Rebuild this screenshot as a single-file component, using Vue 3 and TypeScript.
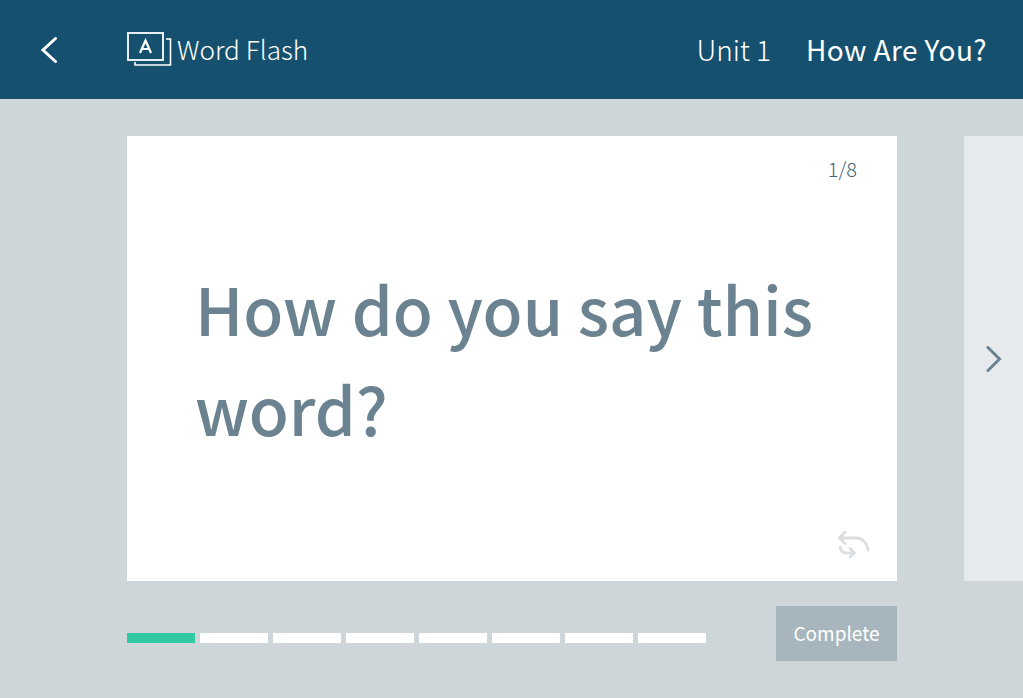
<template>
  <div class="page">
    <header class="top">
      <div class="top-left">
        <button class="back">
          <svg width="18" height="28" viewBox="0 0 18 28"><path d="M15.5 2.5 L3 14 L15.5 25.5" fill="none" stroke="#fff" stroke-width="3" stroke-linecap="round"/></svg>
        </button>
        <div class="brand">
          <svg width="46" height="36" viewBox="0 0 46 36" fill="none" stroke="#fff" stroke-width="1.6">
            <path d="M8 30 V33 H43.5 V7 H39"/>
            <rect x="1" y="1" width="35" height="27" stroke-width="1.8"/>
            <path d="M13 21 L18.5 8.5 L24 21 M15.5 17 H21.5" stroke-width="2.2"/>
          </svg>
          <span class="brand-name">Word Flash</span>
        </div>
      </div>
      <div class="crumbs">
        <span class="unit">Unit 1</span>
        <span class="lesson">How Are You?</span>
      </div>
    </header>

    <main class="stage">
      <div class="cards">
        <section class="card">
          <div class="count">1/8</div>
          <h1 class="question">How do you say this word?</h1>
          <svg class="flip" width="32" height="30" viewBox="0 0 32 30" fill="none" stroke="#dcdfe1" stroke-width="3" stroke-linecap="round" stroke-linejoin="round">
            <path d="M7 2 L1.5 8 L7 13.5 M1.5 8 H18 C25 8 29 13 30 20"/>
            <path d="M2 17 C3 21 5 23 8 23 H16 M12 18.5 L16.5 23 L12 27"/>
          </svg>
        </section>
        <aside class="next-card">
          <svg width="16" height="26" viewBox="0 0 16 26"><path d="M2 1.5 L13.5 13 L2 24.5" fill="none" stroke="#6b8391" stroke-width="3" stroke-linecap="round"/></svg>
        </aside>
      </div>

      <div class="bottom">
        <div class="progress">
          <span v-for="n in total" :key="n" class="seg" :class="{ done: n <= current }"></span>
        </div>
        <button class="complete">Complete</button>
      </div>
    </main>
  </div>
</template>

<script setup lang="ts">
const total = 8
const current = 1
</script>

<style>
html,
body {
  margin: 0;
  background: #ced6d9;
}
</style>

<style scoped>
.page {
  width: 1023px;
  height: 698px;
  overflow: hidden;
  background: #ced6d9;
  font-family: "Noto Sans CJK SC", "Noto Sans", sans-serif;
}

.top {
  height: 99px;
  background: #15506f;
  display: flex;
  align-items: center;
  justify-content: space-between;
  padding: 0 36px 2px 40px;
  box-sizing: border-box;
  color: #fff;
}

.top-left {
  display: flex;
  align-items: center;
}

.back {
  width: 87px;
  padding: 2px 0 0;
  border: 0;
  background: none;
  text-align: left;
  display: flex;
}

.brand {
  display: flex;
  align-items: center;
  gap: 4px;
  font-size: 26.2px;
  font-weight: 300;
}

.brand svg {
  margin-top: 2px;
}

.crumbs {
  display: flex;
  gap: 35px;
  font-size: 28px;
}

.unit {
  font-weight: 300;
}

.lesson {
  font-weight: 400;
  letter-spacing: 0.4px;
}

.stage {
  padding: 37px 0 0 127px;
}

.cards {
  display: flex;
  gap: 67px;
}

.card {
  position: relative;
  width: 770px;
  height: 445px;
  background: #fff;
  box-sizing: border-box;
  padding: 122px 70px 0 68px;
}

.count {
  position: absolute;
  top: 18px;
  right: 40px;
  font-size: 20px;
  font-weight: 300;
  color: #486679;
}

.question {
  margin: 0;
  font-size: 65.2px;
  line-height: 100px;
  font-weight: 500;
  color: #6b8391;
}

.flip {
  position: absolute;
  right: 27px;
  bottom: 21px;
}

.next-card {
  flex: 1;
  height: 445px;
  background: #e6eaed;
  display: flex;
  align-items: center;
  padding-left: 22px;
}

.bottom {
  display: flex;
  align-items: flex-start;
  width: 770px;
  justify-content: space-between;
  margin-top: 25px;
}

.progress {
  display: flex;
  gap: 5px;
  margin-top: 27px;
}

.seg {
  width: 68px;
  height: 10px;
  background: #fff;
}

.seg.done {
  background: #30c9a3;
}

.complete {
  width: 121px;
  height: 55px;
  border: 0;
  background: #a7b6bd;
  color: #fff;
  font-family: inherit;
  font-size: 19px;
  padding: 0 0 3px;
}
</style>
